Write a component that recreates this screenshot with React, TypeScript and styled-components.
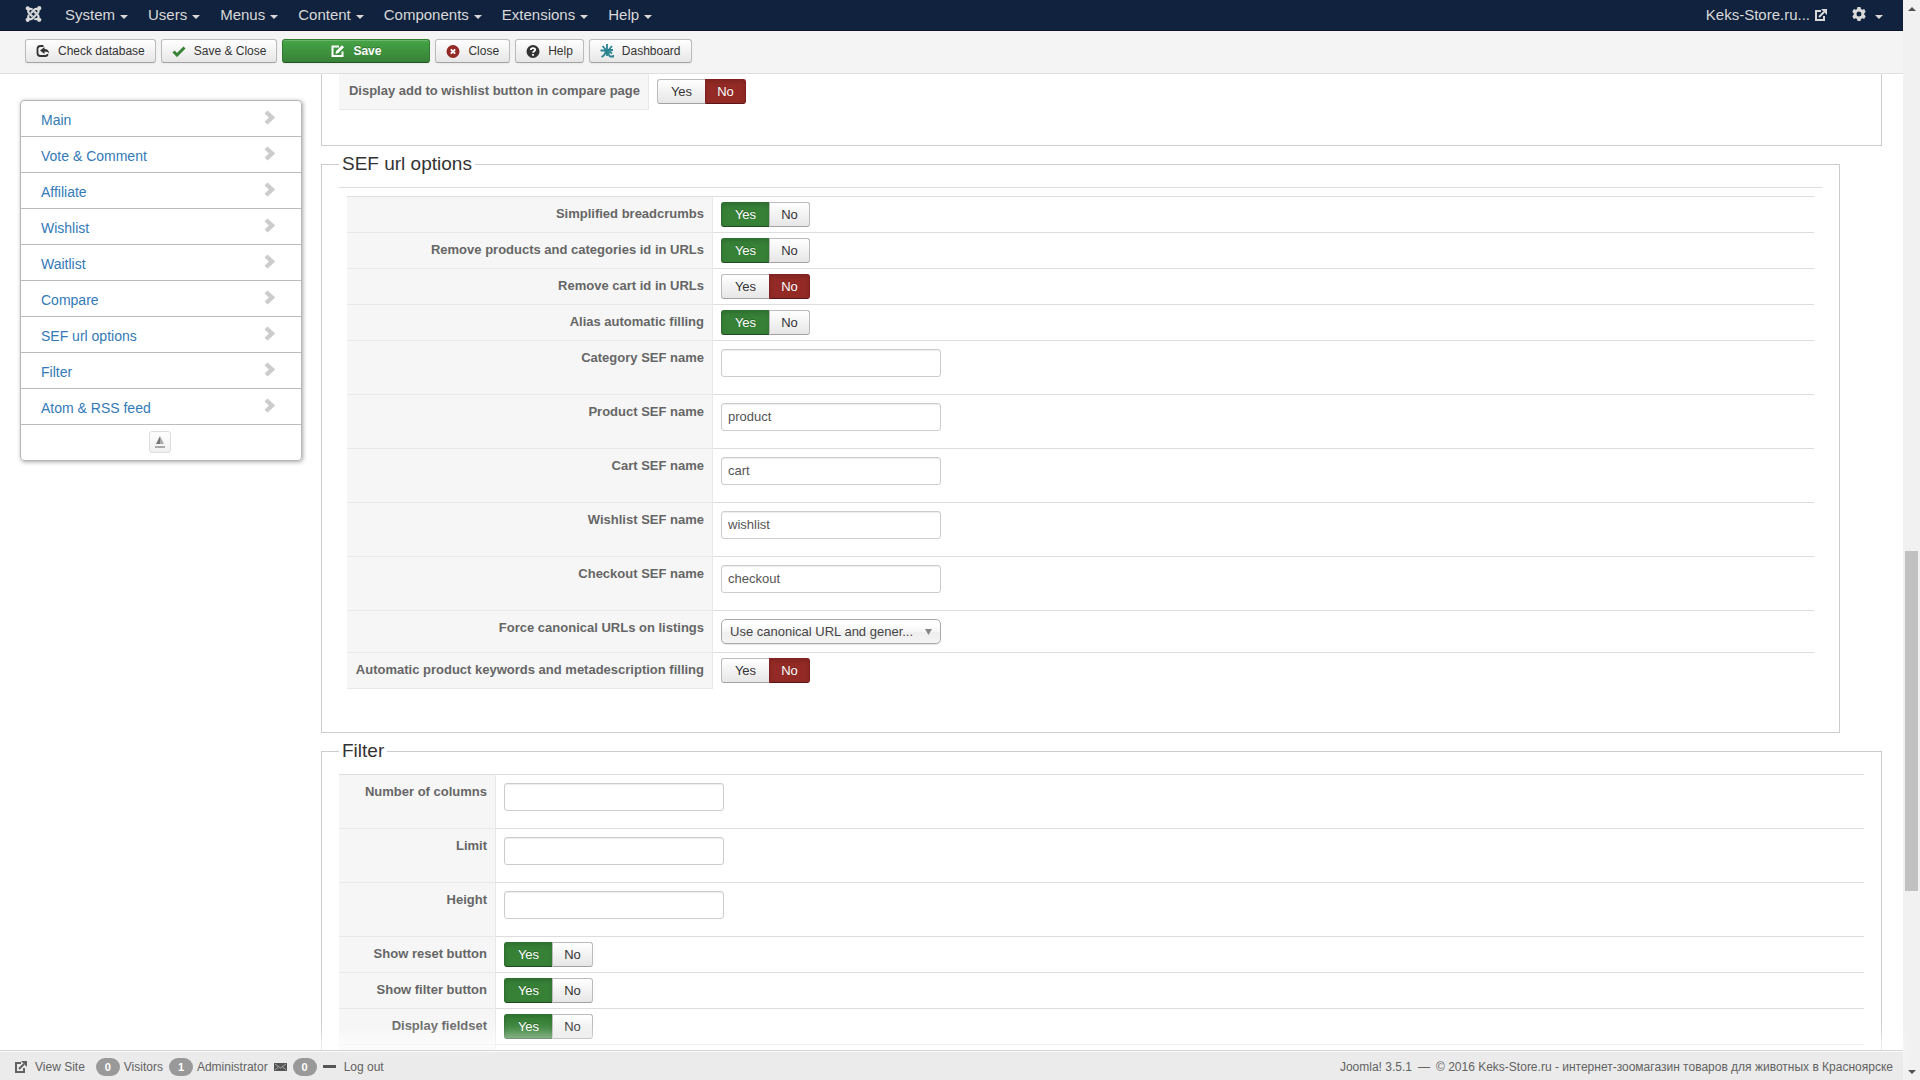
import React from "react";
import styled, { createGlobalStyle, css } from "styled-components";
import { FaJoomla } from "react-icons/fa";

const Global = createGlobalStyle`
  *, *::before, *::after { box-sizing: border-box; }
  body {
    margin: 0;
    overflow: hidden;
    background: #fff;
    color: #333;
    font: 13px/18px "Liberation Sans", Arial, sans-serif;
  }
  button, input, select { font-family: inherit; }
  a { text-decoration: none; color: inherit; }
`;

const Shell = styled.div`
  display: flex;
  height: 100vh;
`;

const Page = styled.div`
  flex: 1;
  min-width: 0;
  display: grid;
  grid-template-rows: auto minmax(0, 1fr) auto;
`;

const Nav = styled.nav`
  display: flex;
  align-items: center;
  height: 31px;
  padding: 0 10px 0 25px;
  background: #10223e;
  border-bottom: 1px solid #0a1528;
  color: #d9d9d9;
  font-size: 15px;
  line-height: 20px;
`;

const Logo = styled.a`
  display: flex;
  width: 17px;
  margin: 0 13px 2px 0;
  font-size: 18px;
`;

const MenuLink = styled.a`
  display: flex;
  align-items: center;
  gap: 5px;
  padding: 0 10px;
`;

const Caret = styled.span`
  margin-top: 3px;
  border: 4px solid transparent;
  border-top-color: currentColor;
  border-bottom: 0;
`;

const SiteLink = styled(MenuLink)`
  margin-left: auto;
  padding: 0 15px 0 0;
`;

const UserLink = styled(MenuLink)`
  gap: 9px;
  svg { margin-bottom: 3px; }
`;

const Toolbar = styled.div`
  display: flex;
  gap: 5px;
  height: 43px;
  padding: 8px 25px;
  background: #f4f4f4;
  border-bottom: 1px solid #dfdfdf;
`;

const ToolButton = styled.button<{ $primary?: boolean }>`
  display: flex;
  align-items: center;
  justify-content: center;
  gap: 8px;
  height: 24px;
  padding: 0 10px;
  border: 1px solid #bbb;
  border-bottom-color: #a2a2a2;
  border-radius: 3px;
  background: linear-gradient(#fff, #e6e6e6);
  box-shadow: inset 0 1px 0 rgba(255, 255, 255, 0.2), 0 1px 2px rgba(0, 0, 0, 0.05);
  color: #333;
  font-size: 12px;
  line-height: 18px;
  svg { width: 14px; }
  ${(p) =>
    p.$primary &&
    css`
      width: 148px;
      border-color: #2f7a2f #2f7a2f #1f5320;
      background: linear-gradient(#46a546, #378137);
      color: #fff;
      font-weight: bold;
      text-shadow: 0 -1px 0 rgba(0, 0, 0, 0.25);
    `}
`;

const Body = styled.div`
  display: flex;
  align-items: flex-start;
  gap: 19px;
  overflow: hidden;
  padding: 0 21px 0 20px;
`;

const SideNav = styled.nav`
  flex: none;
  width: 282px;
  margin-top: 26px;
  border: 1px solid #b6b6b6;
  border-radius: 4px;
  box-shadow: 1px 1px 4px rgba(0, 0, 0, 0.35);
  font-size: 14px;
`;

const SideLink = styled.a`
  display: flex;
  justify-content: space-between;
  height: 36px;
  padding: 8px 26px 0 20px;
  border-bottom: 1px solid #bbb;
  color: #337ab7;
  line-height: 22px;
  svg { margin-top: 1px; }
`;

const SideFoot = styled.div`
  display: flex;
  justify-content: center;
  padding: 6px 2px 7px 0;
`;

const TopButton = styled.button`
  display: flex;
  align-items: center;
  justify-content: center;
  width: 22px;
  height: 22px;
  padding: 0;
  border: 1px solid #ddd;
  border-radius: 3px;
  background: linear-gradient(#fff, #f0f0f0);
`;

const Main = styled.main`
  flex: 1;
  min-width: 0;
`;

const Group = styled.fieldset<{ $continued?: boolean; $inset?: boolean }>`
  min-width: 0;
  margin: 0 ${(p) => (p.$inset ? 42 : 0)}px 8px 0;
  padding: ${(p) => (p.$continued ? 0 : 13)}px 17px 35px;
  border: 1px solid #ccc;
  ${(p) => p.$continued && "border-top: 0;"}
`;

const Legend = styled.legend`
  padding: 0 3px;
  font-size: 19px;
  line-height: 20px;
`;

const Nest = styled.div`
  padding: 8px;
  border-top: 1px solid #ddd;
`;

const Key = styled.th<{ $first?: boolean }>`
  padding: 8px 8px 7px;
  white-space: nowrap;
  vertical-align: top;
  text-align: right;
  background: #f6f6f6;
  border-top: 1px solid ${(p) => (p.$first ? "#ddd" : "#e9e9e9")};
  border-right: 1px solid #e9e9e9;
  color: #666;
`;

const Cell = styled.td<{ $tight?: boolean }>`
  height: 36px;
  padding: ${(p) => (p.$tight ? 5 : 8)}px 8px;
  vertical-align: top;
  border-top: 1px solid #ddd;
`;

const Table = styled.table<{ $keyWidth: number; $open?: boolean }>`
  width: 100%;
  table-layout: fixed;
  border-spacing: 0;
  ${Key} { width: ${(p) => p.$keyWidth}px; }
  tr:last-child ${Key} { border-bottom: 1px solid #e9e9e9; }
  tr:last-child ${Cell} { height: ${(p) => (p.$open ? 36 : 37)}px; }
  ${(p) => p.$open && "tr:first-child > * { border-top: 0; }"}
`;

const Field = styled.input`
  display: block;
  width: 220px;
  height: 28px;
  margin-bottom: 9px;
  padding: 3px 6px 5px;
  border: 1px solid #ccc;
  border-radius: 3px;
  box-shadow: inset 0 1px 1px rgba(0, 0, 0, 0.075);
  color: #555;
  font-size: 13px;
  line-height: 18px;
`;

const SelectWrap = styled.div`
  display: grid;
  align-items: center;
  width: 220px;
  > * { grid-area: 1 / 1; }
  svg { justify-self: end; margin-right: 9px; pointer-events: none; }
`;

const Select = styled.select`
  appearance: none;
  width: 100%;
  height: 25px;
  padding: 0 20px 0 8px;
  border: 1px solid #aaa;
  border-radius: 5px;
  background: linear-gradient(#fff 20%, #f6f6f6 50%, #eee 52%, #f4f4f4 100%);
  box-shadow: 0 1px 1px rgba(0, 0, 0, 0.1);
  color: #444;
  font-size: 13px;
`;

const Switch = styled.div`
  display: flex;
  height: 25px;
`;

const Radio = styled.input`
  position: absolute;
  opacity: 0;
  pointer-events: none;
`;

const Option = styled.label<{ $kind: "yes" | "no" }>`
  width: ${(p) => (p.$kind === "yes" ? 48 : 41)}px;
  border: 1px solid #bbb;
  border-bottom-color: #a2a2a2;
  ${(p) => (p.$kind === "yes" ? "border-right-width: 0;" : "")}
  border-radius: ${(p) => (p.$kind === "yes" ? "3px 0 0 3px" : "0 3px 3px 0")};
  background: linear-gradient(#fff, #e6e6e6);
  color: #333;
  text-align: center;
  line-height: 23px;
  ${Radio}:checked + & {
    border-color: ${(p) => (p.$kind === "yes" ? "#2f6f2f #2f6f2f #1f4a20" : "#802020 #802020 #5a1616")};
    background: ${(p) => (p.$kind === "yes" ? "#378137" : "#942a25")};
    box-shadow: inset 0 2px 4px rgba(0, 0, 0, 0.15);
    color: #fff;
    text-shadow: 0 -1px 0 rgba(0, 0, 0, 0.25);
  }
`;

const Status = styled.footer`
  z-index: 1;
  display: flex;
  align-items: center;
  justify-content: space-between;
  height: 30px;
  padding: 2px 10px 0 15px;
  background: #ebebeb;
  border-top: 1px solid #d4d4d4;
  box-shadow: inset 0 1px 0 rgba(255, 255, 255, 0.8), 0 -15px 15px rgba(255, 255, 255, 0.6);
  color: #626262;
  font-size: 12px;
`;

const StatusGroup = styled.div`
  display: flex;
  align-items: center;
  gap: 6px;
`;

const StatusLink = styled.a`
  display: flex;
  align-items: center;
  gap: 8px;
  &:first-child { margin-right: 5px; }
`;

const Count = styled.span`
  display: flex;
  gap: 4px;
`;

const Badge = styled.span`
  width: 24px;
  border-radius: 9px;
  background: #999;
  color: #fff;
  font-size: 11px;
  font-weight: bold;
  text-align: center;
`;

const ScrollTrack = styled.div`
  display: grid;
  grid-template-rows: 17px 534fr 340fr 172fr 17px;
  justify-items: center;
  align-items: center;
  width: 17px;
  background: #f1f1f1;
`;

const ScrollThumb = styled.div`
  grid-row: 3;
  width: 13px;
  height: 100%;
  background: #c1c1c1;
`;

const ArrowDown = styled.svg`
  grid-row: 5;
`;

const ExternalIcon = () => (
  <svg width="12" height="12" viewBox="0 0 12 12" fill="none" stroke="currentColor" strokeWidth="2">
    <path d="M6 2H1v9h8V7" />
    <path d="M4 8l5-5" />
    <path d="M6 0h6v6z" fill="currentColor" stroke="none" />
  </svg>
);

const GearIcon = () => (
  <svg width="14" height="14" viewBox="0 0 14 14">
    <path
      fill="currentColor"
      fillRule="evenodd"
      d="M5.500 0h3l.5 2 1.200.7 2-.6 1.500 2.600L12.300 6.200v1.600l1.400 1.500-1.500 2.600-2-.6L9 12l-.5 2h-3L5 12l-1.200-.7-2 .6L.3 9.300l1.400-1.500V6.200L.3 4.700l1.500-2.600 2 .6L5 2zM7 4.500a2.500 2.500 0 100 5 2.500 2.500 0 000-5z"
    />
  </svg>
);

const CheckDbIcon = () => (
  <svg height="12" viewBox="0 0 13 12" fill="none" stroke="#333" strokeWidth="1.800">
    <path d="M7 1H4a3 3 0 00-3 3v4a3 3 0 003 3h5a2 2 0 002-2" />
    <path d="M3.500 5.500L8 2v2c3 0 4.500 1.500 4.500 4.500C11.500 7 10 6.700 8 6.800V9z" fill="#333" stroke="none" />
  </svg>
);

const CheckIcon = () => (
  <svg height="11" viewBox="0 0 13 11">
    <path d="M1 5.500l3.500 3.500L12 1.500" fill="none" stroke="#378137" strokeWidth="3" />
  </svg>
);

const EditIcon = () => (
  <svg height="12" viewBox="0 0 13 12" fill="none" stroke="#fff" strokeWidth="2">
    <path d="M7.500 1.500H1v9.500h10V6.500" />
    <path d="M4 9l.7-3L10.500.3l2 2L6.800 8z" fill="#fff" stroke="none" />
  </svg>
);

const CloseIcon = () => (
  <svg height="13" viewBox="0 0 12 12">
    <circle cx="6" cy="6" r="6" fill="#942a25" />
    <path d="M4 4l4 4M8 4L4 8" stroke="#fff" strokeWidth="1.700" />
  </svg>
);

const HelpIcon = () => (
  <svg height="13" viewBox="0 0 12 12">
    <circle cx="6" cy="6" r="6" fill="#333" />
    <path d="M4 4.600C4 2.400 8 2.400 8 4.400 8 5.800 6 5.700 6 7.200M6 8.300v1.700" fill="none" stroke="#fff" strokeWidth="1.700" />
  </svg>
);

const DashboardIcon = () => (
  <svg height="14" viewBox="0 0 14 14" fill="none" stroke="#2b8390" strokeWidth="1.800">
    <path d="M7 0v7M2.500 2l3.500 4M12 2L8.500 6M.5 6.500L13 6M6 6.500C5.500 9.500 4 12 1.500 13M7 7v5M8.500 7c0 3 .5 5.500 2 5.500h3V11M9 7l3 2.500" />
  </svg>
);

const Chevron = () => (
  <svg width="11" height="15" viewBox="0 0 11 15">
    <path d="M2 2l6 5.500L2 13" fill="none" stroke="#ccc" strokeWidth="4.400" />
  </svg>
);

const TopIcon = () => (
  <svg width="10" height="13" viewBox="0 0 10 13">
    <path d="M5 0L1 8h4z" fill="#777" />
    <path d="M5 0l4 8H5z" fill="#aaa" />
    <path d="M0 11h10" stroke="#aaa" strokeWidth="2" />
  </svg>
);

const MailIcon = () => (
  <svg width="13" height="8" viewBox="0 0 13 8">
    <path d="M0 0h13v8H0z" fill="#555" />
    <path d="M1 1l5.500 4L12 1M1 7l3.500-3M12 7L8.500 4" fill="none" stroke="#bbb" strokeWidth=".8" />
  </svg>
);

const MinusIcon = () => (
  <svg width="13" height="3" viewBox="0 0 13 3">
    <path d="M0 0h13v3H0z" fill="#555" />
  </svg>
);

const menus = ["System", "Users", "Menus", "Content", "Components", "Extensions", "Help"];
const sections = [
  "Main",
  "Vote & Comment",
  "Affiliate",
  "Wishlist",
  "Waitlist",
  "Compare",
  "SEF url options",
  "Filter",
  "Atom & RSS feed",
];

type Setting =
  | { label: string; kind: "switch"; on: boolean }
  | { label: string; kind: "text"; value: string }
  | { label: string; kind: "select"; value: string };

const compareSettings: Setting[] = [
  { label: "Display add to wishlist button in compare page", kind: "switch", on: false },
];

const sefSettings: Setting[] = [
  { label: "Simplified breadcrumbs", kind: "switch", on: true },
  { label: "Remove products and categories id in URLs", kind: "switch", on: true },
  { label: "Remove cart id in URLs", kind: "switch", on: false },
  { label: "Alias automatic filling", kind: "switch", on: true },
  { label: "Category SEF name", kind: "text", value: "" },
  { label: "Product SEF name", kind: "text", value: "product" },
  { label: "Cart SEF name", kind: "text", value: "cart" },
  { label: "Wishlist SEF name", kind: "text", value: "wishlist" },
  { label: "Checkout SEF name", kind: "text", value: "checkout" },
  { label: "Force canonical URLs on listings", kind: "select", value: "Use canonical URL and gener..." },
  { label: "Automatic product keywords and metadescription filling", kind: "switch", on: false },
];

const filterSettings: Setting[] = [
  { label: "Number of columns", kind: "text", value: "" },
  { label: "Limit", kind: "text", value: "" },
  { label: "Height", kind: "text", value: "" },
  { label: "Show reset button", kind: "switch", on: true },
  { label: "Show filter button", kind: "switch", on: true },
  { label: "Display fieldset", kind: "switch", on: true },
  { label: "", kind: "switch", on: true },
];

const slug = (s: string) => s.toLowerCase().replace(/[^a-z]+/g, "-");

function Control({ item }: { item: Setting }) {
  const id = slug(item.label);
  if (item.kind === "text") return <Field id={id} type="text" defaultValue={item.value} />;
  if (item.kind === "select")
    return (
      <SelectWrap>
        <Select id={id}>
          <option>{item.value}</option>
        </Select>
        <svg width="7" height="6" viewBox="0 0 7 6">
          <path d="M0 0h7L3.500 6z" fill="#888" />
        </svg>
      </SelectWrap>
    );
  return (
    <Switch role="radiogroup" aria-labelledby={id}>
      <Radio type="radio" id={`${id}-yes`} name={id} defaultChecked={item.on} />
      <Option $kind="yes" htmlFor={`${id}-yes`}>Yes</Option>
      <Radio type="radio" id={`${id}-no`} name={id} defaultChecked={!item.on} />
      <Option $kind="no" htmlFor={`${id}-no`}>No</Option>
    </Switch>
  );
}

function Settings({ items, keyWidth, open }: { items: Setting[]; keyWidth: number; open?: boolean }) {
  return (
    <Table $keyWidth={keyWidth} $open={open}>
      <tbody>
        {items.map((item, i) => (
          <tr key={item.label}>
            <Key scope="row" $first={i === 0}>
              {item.kind === "switch" ? (
                <span id={slug(item.label)}>{item.label}</span>
              ) : (
                <label htmlFor={slug(item.label)}>{item.label}</label>
              )}
            </Key>
            <Cell $tight={item.kind === "switch"}>{item.label && <Control item={item} />}</Cell>
          </tr>
        ))}
      </tbody>
    </Table>
  );
}

export default function App() {
  return (
    <>
      <Global />
      <Shell>
        <Page>
          <header>
            <Nav>
              <Logo href="#" aria-label="Joomla">
                <FaJoomla />
              </Logo>
              {menus.map((m) => (
                <MenuLink href="#" key={m}>
                  {m}
                  <Caret />
                </MenuLink>
              ))}
              <SiteLink href="#">
                Keks-Store.ru...
                <ExternalIcon />
              </SiteLink>
              <UserLink href="#" aria-label="User menu">
                <GearIcon />
                <Caret />
              </UserLink>
            </Nav>
            <Toolbar>
              <ToolButton><CheckDbIcon />Check database</ToolButton>
              <ToolButton><CheckIcon />Save &amp; Close</ToolButton>
              <ToolButton $primary><EditIcon />Save</ToolButton>
              <ToolButton><CloseIcon />Close</ToolButton>
              <ToolButton><HelpIcon />Help</ToolButton>
              <ToolButton><DashboardIcon />Dashboard</ToolButton>
            </Toolbar>
          </header>
          <Body>
            <SideNav>
              {sections.map((s) => (
                <SideLink href="#" key={s}>
                  {s}
                  <Chevron />
                </SideLink>
              ))}
              <SideFoot>
                <TopButton aria-label="Back to top">
                  <TopIcon />
                </TopButton>
              </SideFoot>
            </SideNav>
            <Main>
              <Group $continued aria-label="Compare">
                <Settings items={compareSettings} keyWidth={310} open />
              </Group>
              <Group $inset>
                <Legend>SEF url options</Legend>
                <Nest>
                  <Settings items={sefSettings} keyWidth={366} />
                </Nest>
              </Group>
              <Group>
                <Legend>Filter</Legend>
                <Settings items={filterSettings} keyWidth={157} />
              </Group>
            </Main>
          </Body>
          <Status>
            <StatusGroup>
              <StatusLink href="#"><ExternalIcon />View Site</StatusLink>
              <Count><Badge>0</Badge>Visitors</Count>
              <Count><Badge>1</Badge>Administrator</Count>
              <MailIcon />
              <Badge>0</Badge>
              <StatusLink href="#"><MinusIcon />Log out</StatusLink>
            </StatusGroup>
            <StatusGroup>
              <span>Joomla! 3.5.1</span>
              <span>—</span>
              <span>© 2016 Keks-Store.ru - интернет-зоомагазин товаров для животных в Красноярске</span>
            </StatusGroup>
          </Status>
        </Page>
        <ScrollTrack aria-hidden="true">
          <svg width="8" height="4" viewBox="0 0 8 4">
            <path d="M0 4l4-4 4 4z" fill="#505050" />
          </svg>
          <ScrollThumb />
          <ArrowDown width="8" height="4" viewBox="0 0 8 4">
            <path d="M0 0l4 4 4-4z" fill="#505050" />
          </ArrowDown>
        </ScrollTrack>
      </Shell>
    </>
  );
}
